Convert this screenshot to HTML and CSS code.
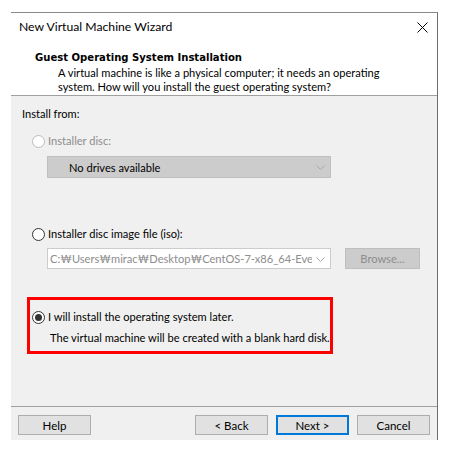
FILE: index.html
```html
<!DOCTYPE html>
<html>
<head>
<meta charset="utf-8">
<link rel="stylesheet" href="styles.css">
</head>
<body>
<div class="window">
  <div class="titlebar">
    <span class="title">New Virtual Machine Wizard</span>
    <svg class="close" width="11" height="11" viewBox="0 0 11 11"><path d="M0.5 0.5 L10.5 10.5 M10.5 0.5 L0.5 10.5" stroke="#000" stroke-width="1" fill="none"/></svg>
  </div>
  <div class="header">
    <div class="h-title">Guest Operating System Installation</div>
    <div class="h-desc">A virtual machine is like a physical computer; it needs an operating<br>system. How will you install the guest operating system?</div>
  </div>
  <div class="content">
    <div class="label">Install from:</div>
    <div class="radio-row disabled row1"><span class="radio"></span><span>Installer disc:</span></div>
    <div class="combo combo-disabled"><span class="combo-text">No drives available</span><svg class="chev" width="9" height="5" viewBox="0 0 9 5"><path d="M0.5 0.5 L4.5 4.5 L8.5 0.5" stroke="#a8a8a8" fill="none"/></svg></div>
    <div class="radio-row row2"><span class="radio"></span><span>Installer disc image file (iso):</span></div>
    <div class="iso-row">
      <div class="combo combo-iso"><span class="combo-text iso-text">C:₩Users₩mirac₩Desktop₩CentOS-7-x86_64-Every</span><svg class="chev" width="9" height="5" viewBox="0 0 9 5"><path d="M0.5 0.5 L4.5 4.5 L8.5 0.5" stroke="#a8a8a8" fill="none"/></svg></div>
      <div class="browse">Browse...</div>
    </div>
    <div class="highlight">
      <div class="radio-row row3"><span class="radio checked"></span><span>I will install the operating system later.</span></div>
      <div class="note">The virtual machine will be created with a blank hard disk.</div>
    </div>
  </div>
  <div class="footer">
    <div class="btn">Help</div>
    <div class="spacer"></div>
    <div class="btn">&lt; Back</div>
    <div class="btn primary">Next &gt;</div>
    <div class="btn">Cancel</div>
  </div>
</div>
</body>
</html>
```

FILE: styles.css
```css
html, body {
  margin: 0;
  padding: 0;
  background: #ffffff;
}
body {
  font-family: Lato, "Noto Sans CJK KR", sans-serif;
  font-size: 11.1px;
  color: #000;
}
.window {
  margin: 12px 0 0 11px;
  width: 426px;
  border-top: 1px solid #898989;
  border-right: 1px solid #6f6f6f;
  height: 427px;
  display: flex;
  flex-direction: column;
  background: #f0f0f0;
}
.titlebar {
  height: 30px;
  flex: none;
  background: #fff;
  display: flex;
  align-items: center;
  justify-content: space-between;
  padding: 0 9px 0 8px;
}
.title {
  font-size: 12.2px;
  line-height: 16px;
  margin-top: -2px;
}
.close {
  display: block;
  margin-top: -2px;
}
.header {
  background: #fff;
  flex: none;
  height: 52px;
  border-bottom: 1px solid #a0a0a0;
  padding-left: 24px;
  box-sizing: content-box;
}
.h-title {
  font-family: "DejaVu Sans Condensed", "DejaVu Sans", sans-serif;
  font-stretch: condensed;
  font-weight: bold;
  font-size: 11.2px;
  line-height: 14px;
  margin-top: 8px;
}
.h-desc {
  margin-left: 23px;
  line-height: 13.5px;
  margin-top: 1px;
}
.content {
  flex: 1;
  padding: 10px 0 0 11px;
}
.label {
  line-height: 16px;
}
.radio-row {
  display: flex;
  align-items: center;
  height: 16px;
  line-height: 16px;
  margin-left: 10px;
}
.radio {
  width: 11px;
  height: 11px;
  border: 1px solid #333;
  border-radius: 50%;
  background: #fff;
  margin-right: 3px;
  box-sizing: content-box;
  position: relative;
  flex: none;
}
.radio.checked::after {
  content: "";
  position: absolute;
  left: 2px;
  top: 2px;
  width: 7px;
  height: 7px;
  border-radius: 50%;
  background: #333;
}
.disabled {
  color: #8d8d8d;
}
.disabled .radio {
  border-color: #bcbcbc;
}
.row1 {
  margin-top: 11px;
}
.combo {
  margin-left: 25px;
  width: 284px;
  height: 22px;
  box-sizing: border-box;
  border: 1px solid #bfbfbf;
  display: flex;
  align-items: center;
  position: relative;
}
.combo-disabled {
  margin-top: 7px;
  background: #cccccc;
}
.combo-text {
  padding-left: 21px;
}
.chev {
  position: absolute;
  right: 5px;
  top: 8px;
}
.row2 {
  margin-top: 48px;
}
.iso-row {
  display: flex;
  margin-top: 6px;
  height: 21px;
}
.combo-iso {
  height: 21px;
  background: #fff;
  border-color: #cccccc;
  overflow: hidden;
}
.iso-text {
  padding-left: 2px;
  color: #8d8d8d;
  white-space: nowrap;
  overflow: hidden;
  width: 262px;
  background: #fff;
}
.browse {
  margin-left: 14px;
  width: 75px;
  height: 21px;
  box-sizing: border-box;
  background: #cccccc;
  border: 1px solid #bfbfbf;
  color: #8d8d8d;
  display: flex;
  align-items: center;
  justify-content: center;
}
.highlight {
  margin: 28px 0 0 5px;
  width: 306px;
  height: 57px;
  box-sizing: border-box;
  border: 3px solid #ff0000;
}
.highlight .radio-row {
  margin-left: 2px;
  margin-top: 9px;
}
.note {
  margin-left: 20px;
  margin-top: 5px;
  line-height: 16px;
}
.footer {
  flex: none;
  border-top: 1px solid #a0a0a0;
  height: 34px;
  display: flex;
  align-items: flex-start;
  padding: 8px 7px 0 7px;
  box-sizing: border-box;
}
.spacer {
  flex: 1;
}
.btn {
  width: 73px;
  height: 20px;
  box-sizing: border-box;
  border: 1px solid #adadad;
  background: #e1e1e1;
  display: flex;
  align-items: center;
  justify-content: center;
  margin-left: 8px;
  font-size: 11.5px;
}
.btn:first-child {
  margin-left: 0;
}
.btn.primary {
  border: 2px solid #0078d7;
}
```
